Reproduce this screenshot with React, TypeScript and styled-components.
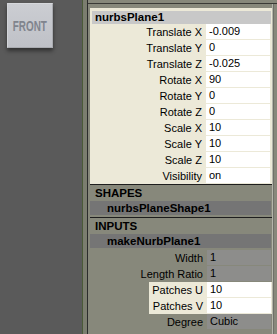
import React from 'react';
import styled, { createGlobalStyle } from 'styled-components';

const GlobalStyle = createGlobalStyle`
  html, body {
    margin: 0;
    padding: 0;
    background: #5a5a5a;
  }
  body {
    font-family: "Liberation Sans", Arial, sans-serif;
    font-size: 11px;
    color: #000000;
  }
`;

interface FieldProps {
  readonly $tone?: 'white' | 'grey';
}

interface RowProps {
  readonly $highlight?: boolean;
}

interface BandProps {
  readonly $tone: 'light' | 'dark';
}

const Screen = styled.div`
  display: flex;
  width: 277px;
  height: 334px;
  overflow: hidden;
`;

const Viewport = styled.div`
  width: 82px;
  padding: 3px 0 0 7px;
  box-sizing: border-box;
  background: #5a5a5a;
`;

const FrontButton = styled.div`
  display: flex;
  align-items: center;
  justify-content: center;
  width: 46px;
  height: 45px;
  box-sizing: border-box;
  border: 1px solid #a9abb0;
  border-top-color: #d6d8dc;
  border-left-color: #d2d4d8;
  background: linear-gradient(#cbcdd2, #bfc1c7);
  box-shadow: 0 3px 4px rgba(0, 0, 0, 0.45);
`;

const FrontLabel = styled.span`
  display: inline-block;
  font-size: 15px;
  font-weight: bold;
  color: #80848d;
  transform: scaleX(0.66);
  letter-spacing: 0;
`;

const Splitter = styled.div`
  width: 5px;
  border-left: 1px solid #4b5a39;
  box-sizing: border-box;
  background: #7b7d6f;
`;

const Editor = styled.div`
  flex: 1;
  display: flex;
  flex-direction: column;
  padding-top: 3px;
  border-left: 1px solid #2c2c2c;
  background: #87887b;
`;

const Body = styled.div`
  flex: 1;
  display: flex;
  border-top: 1px solid #3a3a36;
`;

const Sheet = styled.div`
  flex: 1;
  padding: 4px 0 0 2px;
`;

const ScrollEdge = styled.div`
  width: 5px;
  box-sizing: border-box;
  border-left: 1px solid #b4b4aa;
  box-shadow: inset 1px 0 0 #707068;
`;

const TransformPanel = styled.div`
  padding: 3px 1px 0 2px;
  background: #ece9d8;
`;

const NodeBand = styled.div<BandProps>`
  height: ${p => (p.$tone === 'light' ? '13px' : '14px')};
  line-height: ${p => (p.$tone === 'light' ? '13px' : '14px')};
  padding-left: ${p => (p.$tone === 'light' ? '3px' : '17px')};
  margin: ${p => (p.$tone === 'light' ? '0' : '0 1px 2px 0')};
  background: ${p => (p.$tone === 'light' ? '#c8c8c8' : '#757575')};
  font-size: 11.5px;
  font-weight: bold;
  white-space: nowrap;
`;

const SectionTitle = styled.div`
  height: 16px;
  line-height: 16px;
  padding-left: 5px;
  border-top: 1px solid #1e1e1e;
  margin-right: 0;
  font-size: 11.5px;
  font-weight: bold;
`;

const Row = styled.div<RowProps>`
  display: grid;
  grid-template-columns: 1fr 64px;
  height: 16px;
  padding-right: 1px;
  background: ${p =>
    p.$highlight
      ? 'linear-gradient(to right, transparent 57px, #ece9d8 57px)'
      : 'transparent'};
`;

const Label = styled.div`
  padding-right: 4px;
  line-height: 16px;
  text-align: right;
  white-space: nowrap;
`;

const Field = styled.div<FieldProps>`
  height: 15px;
  line-height: 15px;
  padding-left: 3px;
  background: ${p => (p.$tone === 'grey' ? '#8d8d8b' : '#ffffff')};
  white-space: nowrap;
`;

const InputRows = styled.div`
  padding-left: 2px;
  margin-top: 1px;
`;

const transformAttrs: [string, string][] = [
  ['Translate X', '-0.009'],
  ['Translate Y', '0'],
  ['Translate Z', '-0.025'],
  ['Rotate X', '90'],
  ['Rotate Y', '0'],
  ['Rotate Z', '0'],
  ['Scale X', '10'],
  ['Scale Y', '10'],
  ['Scale Z', '10'],
  ['Visibility', 'on'],
];

const inputAttrs: { name: string; value: string; editable?: boolean }[] = [
  { name: 'Width', value: '1' },
  { name: 'Length Ratio', value: '1' },
  { name: 'Patches U', value: '10', editable: true },
  { name: 'Patches V', value: '10', editable: true },
  { name: 'Degree', value: 'Cubic' },
];

export default function App() {
  return (
    <>
      <GlobalStyle />
      <Screen>
        <Viewport>
          <FrontButton>
            <FrontLabel>FRONT</FrontLabel>
          </FrontButton>
        </Viewport>
        <Splitter />
        <Editor>
          <Body>
            <Sheet>
              <TransformPanel>
                <NodeBand $tone="light">nurbsPlane1</NodeBand>
                {transformAttrs.map(([name, value]) => (
                  <Row key={name}>
                    <Label>{name}</Label>
                    <Field>{value}</Field>
                  </Row>
                ))}
              </TransformPanel>
              <SectionTitle>SHAPES</SectionTitle>
              <NodeBand $tone="dark">nurbsPlaneShape1</NodeBand>
              <SectionTitle>INPUTS</SectionTitle>
              <NodeBand $tone="dark">makeNurbPlane1</NodeBand>
              <InputRows>
                {inputAttrs.map(attr => (
                  <Row key={attr.name} $highlight={attr.editable}>
                    <Label>{attr.name}</Label>
                    <Field $tone={attr.editable ? 'white' : 'grey'}>{attr.value}</Field>
                  </Row>
                ))}
              </InputRows>
            </Sheet>
            <ScrollEdge />
          </Body>
        </Editor>
      </Screen>
    </>
  );
}
